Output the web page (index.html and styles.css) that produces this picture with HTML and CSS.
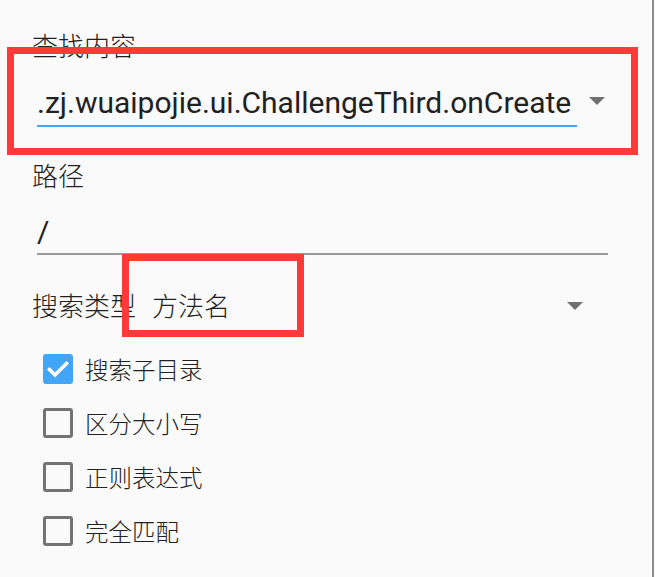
FILE: index.html
```html
<!DOCTYPE html>
<html lang="zh-CN">
<head>
<meta charset="utf-8">
<title>搜索</title>
<link rel="stylesheet" href="styles.css">
</head>
<body>
<div class="dialog">
  <div class="form">
    <div class="label label-first">查找内容</div>
    <div class="combo">
      <div class="input input-active"><span class="input-text">.zj.wuaipojie.ui.ChallengeThird.onCreate</span></div>
      <span class="caret caret-combo"></span>
    </div>
    <div class="label label-path">路径</div>
    <div class="input input-path"><span class="input-text">/</span></div>
    <div class="spinner-row">
      <span class="spinner-label">搜索类型</span>
      <span class="spinner-value">方法名</span>
      <span class="caret caret-spinner"></span>
    </div>
    <ul class="checks">
      <li class="check-row"><span class="box box-on"><svg viewBox="0 0 30 30" width="30" height="30"><path d="M6.5 15.5 L12 21 L23.5 9.5" fill="none" stroke="#fff" stroke-width="3.6" stroke-linecap="square"/></svg></span><span class="check-label">搜索子目录</span></li>
      <li class="check-row"><span class="box"></span><span class="check-label">区分大小写</span></li>
      <li class="check-row"><span class="box"></span><span class="check-label">正则表达式</span></li>
      <li class="check-row"><span class="box"></span><span class="check-label">完全匹配</span></li>
    </ul>
  </div>
  <div class="mark mark-query"></div>
  <div class="mark mark-type"></div>
</div>
</body>
</html>
```
FILE: styles.css
```css
html, body {
  margin: 0;
  padding: 0;
  background: #ffffff;
}
body {
  font-family: Roboto, "Noto Sans CJK SC", "Noto Sans", sans-serif;
  color: #212121;
}
.dialog {
  position: relative;
  width: 652px;
  height: 577px;
  background: #fafafa;
  border-right: 2px solid #8c8c8c;
  overflow: hidden;
}
.form {
  padding: 27px 0 0 32px;
}
.label {
  font-family: "Noto Sans CJK SC", sans-serif;
  font-weight: 300;
  font-size: 26px;
  line-height: 36px;
  color: #212121;
}
.combo {
  display: flex;
  align-items: center;
  margin-top: 20px;
}
.input {
  margin-left: 5px;
  padding-bottom: 2px;
  font-size: 30px;
  line-height: 40px;
  white-space: nowrap;
}
.input-active {
  width: 540px;
  border-bottom: 2px solid #42a5f5;
}
.input-path {
  width: 571px;
  margin-top: 19px;
  padding-bottom: 1px;
  border-bottom: 2px solid #9a9a9a;
}
.caret {
  width: 0;
  height: 0;
  border-left: 8px solid transparent;
  border-right: 8px solid transparent;
  border-top: 8px solid #707070;
}
.caret-combo {
  margin-left: 12px;
  margin-top: -9px;
}
.label-path {
  margin-top: 30px;
}
.spinner-row {
  display: flex;
  align-items: center;
  margin-top: 32px;
  width: 551px;
  font-family: "Noto Sans CJK SC", sans-serif;
  font-weight: 300;
  font-size: 26px;
  line-height: 36px;
}
.spinner-value {
  margin-left: 16px;
  flex: 1;
}
.caret-spinner {
  margin-top: 2px;
}
.checks {
  list-style: none;
  margin: 19px 0 0 0;
  padding: 0 0 0 11px;
}
.check-row {
  display: flex;
  align-items: center;
  height: 54px;
}
.box {
  box-sizing: border-box;
  width: 30px;
  height: 30px;
  border: 3.5px solid #737373;
  border-radius: 3px;
  flex: none;
}
.box-on {
  border: none;
  background: #42a5f5;
}
.box svg {
  display: block;
}
.check-label {
  margin-left: 12px;
  font-family: "Noto Sans CJK SC", sans-serif;
  font-weight: 300;
  font-size: 23.5px;
  line-height: 32px;
  color: #212121;
}
.mark {
  position: absolute;
  border: 7px solid #fc3a3a;
  box-sizing: border-box;
}
.mark-query {
  left: 7px;
  top: 47px;
  width: 631px;
  height: 108px;
}
.mark-type {
  left: 122px;
  top: 254px;
  width: 182px;
  height: 83px;
}
```
